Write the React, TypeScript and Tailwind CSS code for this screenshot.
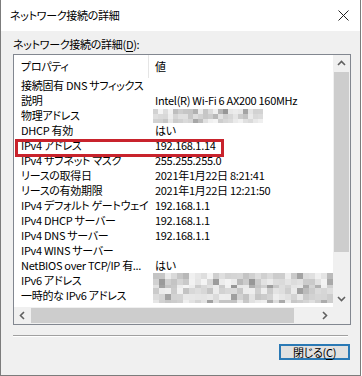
import React from "react";

const rows: [string, string | null][] = [
  ["接続固有 DNS サフィックス", ""],
  ["説明", "Intel(R) Wi-Fi 6 AX200 160MHz"],
  ["物理アドレス", null],
  ["DHCP 有効", "はい"],
  ["IPv4 アドレス", "192.168.1.14"],
  ["IPv4 サブネット マスク", "255.255.255.0"],
  ["リースの取得日", "2021年1月22日 8:21:41"],
  ["リースの有効期限", "2021年1月22日 12:21:50"],
  ["IPv4 デフォルト ゲートウェイ", "192.168.1.1"],
  ["IPv4 DHCP サーバー", "192.168.1.1"],
  ["IPv4 DNS サーバー", "192.168.1.1"],
  ["IPv4 WINS サーバー", ""],
  ["NetBIOS over TCP/IP 有...", "はい"],
  ["IPv6 アドレス", null],
  ["一時的な IPv6 アドレス", null],
];

function Mosaic({ w, h, seed, cell = 6 }: { w: number; h: number; seed: number; cell?: number }) {
  let s = seed;
  const rand = () => {
    s = (s * 1103515245 + 12345) % 2147483648;
    return s / 2147483648;
  };
  const cells: React.ReactNode[] = [];
  for (let y = 0; y < h; y += cell) {
    for (let x = 0; x < w; x += cell) {
      const r = rand();
      const v = Math.round(r < 0.15 ? 150 + rand() * 40 : 195 + rand() * 50);
      cells.push(<rect key={`${x}-${y}`} x={x} y={y} width={cell} height={cell} fill={`rgb(${v},${v},${v})`} />);
    }
  }
  return (
    <svg width={w} height={h} className="block">
      {cells}
    </svg>
  );
}

function Chevron({ dir }: { dir: "up" | "down" | "left" | "right" }) {
  const pts = {
    up: "1,6 4.5,2.5 8,6",
    down: "1,3 4.5,6.5 8,3",
    left: "6,1 2.5,4.5 6,8",
    right: "3,1 6.5,4.5 3,8",
  }[dir];
  return (
    <svg width="9" height="9" viewBox="0 0 9 9">
      <polyline points={pts} fill="none" stroke="#606060" strokeWidth="1.6" />
    </svg>
  );
}

export default function App() {
  return (
    <div className="w-[362px] h-[376px] bg-white">
      <div className="relative w-[361px] h-[376px] bg-[#f0f0f0] border-x border-b border-[#7c7c7c] flex flex-col text-[11px] tracking-[-0.3px] text-black font-['Noto_Sans_CJK_JP',sans-serif] [font-feature-settings:'palt'] leading-[15px]">
        {/* title bar */}
        <div className="h-[31px] bg-white flex items-center justify-between pl-[9px] pr-[11px] shrink-0">
          <span>ネットワーク接続の詳細</span>
          <svg width="11" height="11" viewBox="0 0 11 11">
            <path d="M0.5 0.5 L10.5 10.5 M10.5 0.5 L0.5 10.5" stroke="#222" strokeWidth="1" />
          </svg>
        </div>

        <div className="px-[12px] flex flex-col">
          <div className="h-[15px] mt-[6px] mb-[2px] flex items-center">
            ネットワーク接続の詳細(<span className="underline underline-offset-2">D</span>):
          </div>

          {/* list view */}
          <div className="h-[271px] w-[338px] border border-[#828790] bg-white flex flex-col">
            <div className="flex flex-1 min-h-0">
              <div className="flex-1 overflow-hidden">
                <div className="h-[23px] flex">
                  <div className="w-[135px] pl-[7px] flex items-center border-r border-[#e5e5e5]">プロパティ</div>
                  <div className="pl-[6px] flex items-center">値</div>
                </div>
                {rows.map(([k, v], i) => (
                  <div key={i} className="h-[15px] flex items-center">
                    <div className="w-[135px] shrink-0 pl-[7px] whitespace-nowrap">{k}</div>
                    <div className="pl-[4px] whitespace-nowrap">
                      {v === null ? (
                        i === 2 ? (
                          <Mosaic w={110} h={14} seed={7} cell={5} />
                        ) : (
                          <Mosaic w={184} h={15} seed={i * 31 + 3} cell={6} />
                        )
                      ) : (
                        <span className="pl-[2px]">{v}</span>
                      )}
                    </div>
                  </div>
                ))}
              </div>
              {/* vertical scrollbar */}
              <div className="w-[17px] bg-[#f0f0f0] flex flex-col">
                <div className="h-[17px] flex items-center justify-center">
                  <Chevron dir="up" />
                </div>
                <div className="mx-[1px] h-[180px] bg-[#cdcdcd]" />
                <div className="flex-1" />
                <div className="h-[17px] flex items-center justify-center">
                  <Chevron dir="down" />
                </div>
              </div>
            </div>
            {/* horizontal scrollbar */}
            <div className="h-[17px] flex shrink-0">
              <div className="flex-1 bg-[#f0f0f0] flex items-center">
                <div className="w-[17px] flex items-center justify-center">
                  <Chevron dir="left" />
                </div>
                <div className="h-[15px] w-[263px] bg-[#cdcdcd]" />
                <div className="flex-1" />
                <div className="w-[17px] flex items-center justify-center">
                  <Chevron dir="right" />
                </div>
              </div>
              <div className="w-[17px] bg-[#f0f0f0]" />
            </div>
          </div>

          <div className="mt-[10px] border-t border-[#a0a0a0] border-b border-b-white" />

          <div className="flex justify-end mt-[7px]">
            <button className="w-[71px] h-[16px] mr-[-2px] bg-[#e1e1e1] border-2 border-[#2a79b5] flex items-center justify-center text-[11px] leading-none">
              閉じる(<span className="underline underline-offset-2">C</span>)
            </button>
          </div>
        </div>

        {/* highlight box drawn over the screenshot */}
        <div className="absolute left-[14px] top-[139px] w-[209px] h-[18px] border-[3px] border-[#c8232c]" />
      </div>
    </div>
  );
}
